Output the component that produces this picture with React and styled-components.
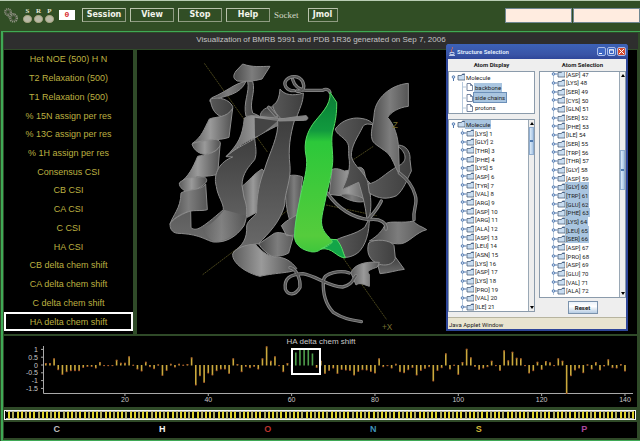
import React from "react";
import styled, { createGlobalStyle } from "styled-components";

const GlobalStyle = createGlobalStyle`
  *, *::before, *::after { box-sizing: border-box; }
  body { margin: 0; background: #2c4724; font-family: "Liberation Sans", Arial, sans-serif; }
  button, input { font: inherit; margin: 0; padding: 0; border-radius: 0; }
  ul, h1, h2, p { margin: 0; padding: 0; font-weight: normal; list-style: none; }
`;

const Page = styled.div`
  display: flex;
  flex-direction: column;
  min-height: 100vh;
  overflow: hidden;
`;

/* ---------- toolbar ---------- */

const Toolbar = styled.header`
  display: flex;
  align-items: flex-start;
  height: 31px;
  padding: 7px 0 0 4px;
  border-top: 1px solid #b9cdb4;
  background: #314e25;
`;

const Lights = styled.div`
  display: flex;
  gap: 2px;
  margin-left: 5px;
`;

const Light = styled.span`
  display: flex;
  flex-direction: column;
  align-items: center;
  width: 9px;
  color: #e4e6d6;
  font: bold 7px/7px "Liberation Serif", serif;

  &::after {
    content: "";
    width: 9px;
    height: 8px;
    border: 1px solid #a3a37e;
    border-radius: 50%;
    background: #b9b9a6;
  }
`;

const Counter = styled.output`
  width: 16px;
  height: 10px;
  margin: 2px 7px 0 5px;
  background: #fff;
  color: #d8262a;
  font: bold 8px/10px "Liberation Mono", monospace;
  text-align: center;
`;

const ToolButton = styled.button`
  width: ${(p) => (p.$narrow ? 30 : 44)}px;
  height: 14px;
  margin-right: 4px;
  border: 1px solid;
  border-color: #b9c3ac #8f9c82 #8f9c82 #b9c3ac;
  background: transparent;
  color: #f2f4ea;
  font: bold 8px/10px "DejaVu Sans", sans-serif;
  white-space: nowrap;
`;

const SocketLabel = styled.span`
  margin: 0 9px 0 0;
  color: #d5dac8;
  font: 9px/14px "Liberation Serif", serif;
`;

const Fields = styled.div`
  display: flex;
  gap: 1px;
  margin-left: auto;
`;

const Field = styled.input`
  width: 67px;
  height: 15px;
  border: 1px solid #6f8791;
  background: #ffece0;
`;

/* ---------- main frame ---------- */

const Frame = styled.main`
  flex: 1;
  display: flex;
  flex-direction: column;
  margin-left: 1px;
  border: solid #3fa956;
  border-width: 1px 0 3px 2px;
  background: #2f4a28;
`;

const TitleBar = styled.h1`
  height: 16px;
  margin: 1px 2px 1px 1px;
  background: #2e2e2e;
  color: #c4c4c4;
  font-size: 8px;
  line-height: 14px;
  text-align: center;
`;

const Workspace = styled.div`
  flex: 1;
  display: flex;
  gap: 4px;
  margin: 0 3px 2px 1px;
`;

const MeasureList = styled.nav`
  display: grid;
  grid-auto-rows: 1fr;
  width: 129px;
  padding-bottom: 3px;
  background: #000;
`;

const MeasureButton = styled.button`
  border: ${(p) => (p.$active ? "2px solid #fff" : "0")};
  background: none;
  color: #bdb040;
  font-size: 9px;
  line-height: 12px;
`;

const Viewer = styled.section`
  position: relative;
  flex: 1;
  background: #000;
`;

const Canvas = styled.svg`
  display: block;
  width: 100%;
  height: auto;
`;

/* ---------- floating window ---------- */

const Dialog = styled.section`
  position: absolute;
  top: -6px;
  right: 9px;
  width: 182px;
  display: flex;
  flex-direction: column;
  border: solid #2e4699;
  border-width: 0 2px 2px;
  border-radius: 3px 3px 0 0;
  background: #eeeeee;
  color: #222;
  font: 6px/8px Roboto, "Liberation Sans", sans-serif;
`;

const DialogTitle = styled.header`
  display: flex;
  align-items: center;
  gap: 1px;
  height: 15px;
  margin: 0 -2px;
  padding: 0 2px 0 3px;
  border-radius: 3px 3px 0 0;
  background: linear-gradient(#3c62b8, #3954a6 70%, #2e4699);
  color: #dfe6f8;

  h2 { flex: 1; padding-left: 1px; font: bold 6px/10px Roboto, sans-serif; }
`;

const WindowButton = styled.button`
  display: grid;
  place-items: center;
  width: 9px;
  height: 9px;
  border: 1px solid #a9bce8;
  border-radius: 2px;
  background: ${(p) => (p.$close ? "#d4492f" : "#3f68c4")};
`;

const Panes = styled.div`
  display: grid;
  grid-template-columns: 87px 4px 1fr;
`;

const Pane = styled.div`
  display: flex;
  flex-direction: column;
  min-width: 0;
`;

const PaneHead = styled.h2`
  font: bold 6px/12px Roboto, "Liberation Sans", sans-serif;
  text-align: center;
`;

const Splitter = styled.div`
  flex: none;
  height: ${(p) => (p.$horizontal ? "5px" : "auto")};
  background: radial-gradient(circle, #b9bec4 40%, #eeeeee 45%) 0 0 / 2px 2px;
`;

const TreeBox = styled.div`
  display: flex;
  height: ${(p) => p.$height}px;
  border: 1px solid #8b9bab;
  background: #fff;
  overflow: hidden;
`;

const Tree = styled.ul`
  flex: 1;
  display: grid;
  grid-auto-rows: 1fr;
  min-width: 0;
  margin: ${(p) => (p.$scrolled ? "-2px 0 2px" : "0")};
`;

const TreeRow = styled.li`
  display: flex;
  align-items: center;
  min-height: 0;
  padding-left: ${(p) => p.$indent}px;
  background: ${(p) =>
    p.$guide
      ? `linear-gradient(#b5c8dc, #b5c8dc) ${p.$indent + 2}px 0 / 1px 100% no-repeat`
      : "none"};

  svg { flex: none; }
`;

const NodeLabel = styled.span`
  padding: 0 1px;
  background: ${(p) => (p.$selected ? "#a9c5e0" : "transparent")};
  outline: ${(p) => (p.$focused ? "1px solid #6b8fb8" : "0")};
  line-height: 9px;
  white-space: nowrap;
`;

const ScrollBar = styled.div`
  display: flex;
  flex-direction: column;
  width: 6px;
  border-left: 1px solid #9aa8b5;
  background: #eeeeee;
`;

const ScrollArrow = styled.button`
  display: grid;
  place-items: center;
  height: 7px;
  border: 0;
  background: #eeeeee;
`;

const ScrollTrack = styled.div`
  flex: 1;
  padding-top: ${(p) => p.$offset}px;

  &::before {
    content: "";
    display: block;
    height: ${(p) => p.$thumb}px;
    border: 1px solid #8fadd0;
    background: linear-gradient(#4f7ab0, #4f7ab0) center / 3px 2px no-repeat,
      linear-gradient(90deg, #dcebf8, #a9c6e6);
  }
`;

const ResetButton = styled.button`
  align-self: center;
  width: 30px;
  height: 13px;
  margin-top: 3px;
  border: 1px solid #7b93ad;
  background: linear-gradient(#eaf2fa, #fff 40%, #b6cde4);
  color: #222;
  font: bold 6px/9px Roboto, sans-serif;
`;

const StatusLine = styled.p`
  height: 12px;
  margin-top: 3px;
  padding-left: 1px;
  border-top: 1px solid #b7b49f;
  background: #e8e4d0;
  line-height: 14px;
`;

/* ---------- lower panels ---------- */

const ChartPanel = styled.section`
  margin: 0 3px 3px 1px;
  background: #000;
`;

const ResidueStrip = styled.div`
  display: flex;
  height: 10px;
  margin: 0 4px 2px 1px;
  padding: 0 1px;
  border: 1px solid #f4f4f4;
  background: #000;
`;

const Residue = styled.i`
  flex: 1;
  border: solid;
  border-width: 1px 2px 1px 0;
  border-color: #b9b9b9 ${(p) => (p.$strong ? "#e0d22c" : "#b3ac58")} #b9b9b9;
  background: #000;
`;

const Legend = styled.ul`
  display: grid;
  grid-template-columns: repeat(6, 1fr);
  margin: 0 3px 2px 1px;
  padding-bottom: 2px;
  background: #000;
`;

const LegendItem = styled.li`
  color: ${(p) => p.$color};
  font: bold 9px/14px "Liberation Sans", sans-serif;
  text-align: center;
`;

/* ---------- data ---------- */

const MEASURES = [
  "Het NOE (500) H N", "T2 Relaxation (500)", "T1 Relaxation (500)",
  "% 15N assign per res", "% 13C assign per res", "% 1H assign per res",
  "Consensus CSI", "CB CSI", "CA CSI", "C CSI", "HA CSI",
  "CB delta chem shift", "CA delta chem shift", "C delta chem shift",
  "HA delta chem shift",
];

const FIRST = "LYS GLY THR PHE LYS ASP TYR VAL ARG ASP ARG ALA ASP LEU ASN LYS ASP LYS PRO VAL ILE".split(" ");
const SECOND = "ASP LYS SER CYS GLN SER PHE ILE SER TRP THR GLY ASP GLY TRP GLU PHE LYS LEU SER ASP PRO ASP GLU VAL ALA".split(" ");
const SECOND_START = 47;

const ATOMS = [
  ["C", "#bdbdbd"], ["H", "#f4f4f4"], ["O", "#b8322c"],
  ["N", "#3f93b8"], ["S", "#d0b638"], ["P", "#a8489c"],
];

/* Shift per residue, 47 steps to one ppm. */
const SHIFTS = [
  7, 7, 21, -14, -28, -20, -17, -17, -17, -7, -4, -4, -9, 10, -2, -2, -2, 17, 8, 8,
  27, 2, -12, -18, 11, -5, -11, 3, -31, -16, 5, -6, 5, 2, 4, 24, -60, -32, -52, -24,
  -30, -17, -12, -12, -25, 21, 4, -20, -4, -8, -4, -12, 21, 57, 14, 27, -2, -20, 7, -20,
  39, 50, 51, 51, 36, -7, 14, -25, -16, -9, -25, -13, -15, -16, -30, -19, -14, -15, -19, -24,
  21, -5, -2, -9, 5, -20, -23, -14, -7, -30, -16, -10, -5, -48, -16, -8, 36, -12, 2, -28,
  10, 50, 24, -4, -13, -9, -5, 14, -2, -16, 45, 15, 41, 23, 21, -2, -24, -17, 11, -13,
  13, 9, -2, 21, 14, -85, -32, -15, -9, -23, 3, -12, 10, -15, -3, 18, -8, -9, 4, -18,
];

const AXIS_TICKS = [[1, "1"], [0.5, "0.5"], [0, "0"], [-0.5, "-0.5"], [-1, "-1"], [-1.5, "-1.5"]];

/* ---------- drawings ---------- */

function Gears() {
  return (
    <svg width="14" height="15" viewBox="0 0 14 15" fill="none" aria-hidden="true">
      <circle cx="4" cy="4" r="3" stroke="#8e9282" strokeWidth="2" strokeDasharray="1 .7" />
      <circle cx="9.500" cy="10" r="3.500" stroke="#8e9282" strokeWidth="2.200" strokeDasharray="1.200 .7" />
      <circle cx="4" cy="4" r="2" stroke="#5b6050" />
      <circle cx="9.500" cy="10" r="2.300" stroke="#5b6050" />
      <path d="M6 5l5 1M3 7l3 4" stroke="#777b6b" />
    </svg>
  );
}

function Ribbon() {
  return (
    <Canvas viewBox="3 3 1500 852" role="img" aria-label="Protein ribbon model with axes">
      <defs>
        <linearGradient id="g1"><stop offset="0" stopColor="#4a4a4a" /><stop offset=".5" stopColor="#7d7d7d" /><stop offset="1" stopColor="#555" /></linearGradient>
        <linearGradient id="g2" x2="0" y2="1"><stop offset="0" stopColor="#3e3e3e" /><stop offset="1" stopColor="#6a6a6a" /></linearGradient>
        <linearGradient id="g3"><stop offset="0" stopColor="#5c5c5c" /><stop offset=".45" stopColor="#9a9a9a" /><stop offset="1" stopColor="#505050" /></linearGradient>
        <linearGradient id="g4"><stop offset="0" stopColor="#585858" /><stop offset="1" stopColor="#3f3f3f" /></linearGradient>
        <linearGradient id="green" x2="0" y2="1"><stop offset="0" stopColor="#0f7a36" /><stop offset=".12" stopColor="#0c8c3a" /><stop offset=".24" stopColor="#129a3e" /><stop offset=".31" stopColor="#2cc83a" /><stop offset=".9" stopColor="#55cc3c" /><stop offset="1" stopColor="#3fc63c" /></linearGradient>
      </defs>
      <g stroke="#6d6628" strokeWidth="2" strokeDasharray="6 2" fill="none">
        <path d="M205 43L395 310M200 677L480 465M640 340L712 292M622 628L752 812M570 468L722 500" />
      </g>
      <g stroke="#8b8b8b" strokeWidth="3" strokeLinejoin="round">
        {/* far strands */}
        <path fill="url(#g1)" d="M448 388C460 374 485 378 500 384L492 450 476 545C458 520 446 470 448 388Z" />
        <path fill="url(#g3)" d="M318 412C340 395 352 375 378 360L392 375 366 440 362 490 334 505Z" />
        <path fill="url(#g1)" d="M436 530C450 515 465 508 482 498L482 558 452 560ZM368 585L415 553C435 545 455 560 472 562L458 612C440 622 425 622 408 622 390 612 378 600 368 585Z" />
        <path fill="url(#g3)" d="M588 362C600 355 615 362 625 366L660 360C668 350 682 355 685 368L690 392C720 410 705 440 695 450L580 436Z" />
        <path fill="url(#g1)" d="M612 437C630 430 672 440 684 450L682 458C660 462 630 452 612 437Z" />
        <path fill="url(#g2)" d="M372 202C374 184 392 172 410 174L426 190 426 212 398 206Z" />
        <path fill="url(#g4)" d="M432 120C445 138 470 142 502 132 502 160 490 180 482 205L438 212C425 200 414 188 410 170 425 160 430 145 432 120Z" />
        {/* left helix */}
        <path fill="url(#g1)" d="M320 45C350 56 376 52 402 52L378 90C352 97 332 98 304 96 289 88 292 78 300 66Z" />
        <path fill="url(#g4)" d="M338 97L350 97C360 130 338 160 350 192L368 200 330 202C320 160 342 130 335 97Z" />
        <path fill="url(#g1)" d="M330 97C295 103 272 128 228 146 215 156 224 166 232 152 270 140 312 138 330 97Z" />
        <path fill="url(#g4)" d="M223 150C225 178 240 205 268 204 284 197 292 184 290 172 280 152 250 142 223 150Z" />
        <path fill="url(#g3)" d="M220 210C240 202 272 208 290 178L279 265C250 276 202 270 168 284 198 264 204 240 220 210Z" />
        <path fill="url(#g3)" d="M168 285C173 303 190 316 210 316 236 310 252 298 253 285 254 273 240 270 230 272 202 276 182 278 168 285Z" />
        <path fill="url(#g3)" d="M185 322C205 316 240 316 252 290L245 376C215 386 150 378 131 402 158 382 170 358 185 322Z" />
        <path fill="url(#g3)" d="M130 402C129 416 145 428 160 427 186 420 209 408 212 395 213 384 200 382 190 384 166 386 146 386 130 402Z" />
        <path fill="url(#g1)" d="M135 432C150 421 200 424 209 405L214 482C194 488 168 480 145 492 126 500 106 514 102 526 110 498 134 480 135 432Z" />
        {/* lower left sweep */}
        <path fill="url(#g2)" d="M270 323C300 295 350 275 356 268 358 290 364 312 356 332 340 352 318 372 318 410L324 446C334 470 336 500 324 530 300 565 268 582 232 579 205 572 190 555 125 553 106 551 100 535 103 522 118 504 145 492 164 486L165 536C180 548 195 540 262 482 264 465 244 440 241 412 230 374 252 338 290 324Z" />
        <path fill="url(#g3)" stroke="none" d="M196 538C225 532 250 500 264 482L330 500C320 550 270 580 234 577 215 570 210 552 196 538Z" opacity=".55" />
        {/* crossing and long central strand */}
        <path fill="url(#g3)" d="M325 207L346 200C384 205 410 204 475 214 440 220 400 240 355 268 322 280 300 298 270 323 306 286 320 262 325 207Z" />
        <path fill="#444" stroke="none" d="M356 206L424 216C400 238 375 258 357 264Z" />
        <path fill="url(#g2)" d="M425 214L476 212C462 260 456 300 462 350 466 392 446 430 446 468 432 520 400 550 368 584 330 588 304 598 292 610 320 588 334 570 332 530 336 510 362 502 362 488 362 440 370 400 386 360 400 312 430 260 425 214Z" />
        <path fill="url(#g3)" d="M290 615C296 598 330 586 358 586 374 604 392 620 414 624 448 622 468 640 482 658 480 672 420 670 372 682 330 672 288 642 290 615Z" />
        <path fill="#858585" d="M428 210C455 208 480 202 510 200 520 206 515 214 505 214L428 216Z" />
        {/* right side */}
        <path fill="url(#g4)" d="M598 240C612 220 635 208 662 207 690 208 706 216 712 228 692 222 684 226 680 234 665 265 645 290 646 322 652 352 690 372 696 402 706 440 708 480 698 514L692 505C688 470 680 440 668 400L618 422C634 390 642 365 640 335 634 300 646 290 625 270 614 260 600 252 598 240Z" />
        <path fill="url(#g4)" d="M788 288C812 290 824 310 822 332L826 366C812 394 804 420 782 440 752 452 728 450 700 432L696 405C728 400 744 374 788 350 815 338 812 312 788 294Z" />
        <path fill="url(#g1)" d="M817 103L817 172C785 176 765 190 755 205 776 230 786 262 788 300L790 376C774 350 772 330 755 312 730 292 710 284 708 270 702 250 712 230 715 190 720 150 760 108 817 103Z" />
        <path fill="url(#g4)" d="M602 572C625 560 660 556 686 535L700 508C700 550 690 590 665 612 650 622 638 625 628 625Z" />
        <path fill="url(#g1)" d="M748 524C765 514 800 524 832 516 842 530 858 532 872 542 840 550 820 580 796 584 768 588 730 570 700 576 726 560 740 545 748 524Z" />
        <path fill="url(#g2)" d="M778 624L805 661C780 664 758 672 732 674L726 650Z" />
        <path fill="url(#g4)" d="M698 582C715 568 765 572 774 590L778 628C770 650 745 650 730 646 700 636 690 610 698 582Z" />
        <path fill="url(#g3)" d="M645 672C652 650 680 636 730 640L724 654C702 662 690 666 700 676L700 712C680 705 670 700 660 708Z" />
      </g>
      {/* thin coils: a light edge with a darker core */}
      {[["#8b8b8b", 10], ["#585858", 5]].map(([color, width]) => (
        <g key={color} fill="none" stroke={color} strokeWidth={width} strokeLinecap="round">
          <path d="M474 125C450 125 440 105 452 92 465 78 490 80 500 98 508 115 500 130 482 126M470 92C475 110 490 122 510 124L560 124C570 118 580 122 582 130" />
          <path d="M398 175L420 200M790 372C815 390 830 410 838 440 846 465 830 480 834 512" />
          <path d="M574 432C600 470 640 505 700 512 735 508 752 522 750 540M736 456C725 480 710 495 698 510" />
          <path d="M462 656C482 660 494 690 492 715 478 740 456 740 448 720 444 690 460 676 500 674 540 680 580 714 620 714 650 708 650 690 660 680M640 672C612 662 566 672 562 694 560 730 568 765 592 790 620 808 640 812 676 818" />
        </g>
      ))}
      <g stroke="#55dc62" strokeWidth="3" strokeLinejoin="round">
        <path fill="url(#green)" d="M582 130L602 160C603 190 598 220 592 240 582 270 592 310 590 340 586 380 578 410 572 432 566 470 552 510 558 530 562 552 580 562 583 571L602 572 555 600C545 610 530 610 520 607 490 600 472 580 476 555 476 520 490 460 498 420 508 380 516 345 510 320 502 280 514 250 530 226 550 198 586 170 582 130Z" />
        <path fill="#12a548" d="M555 600C575 592 600 580 583 571L602 572C618 590 620 608 628 627 600 625 590 594 555 600Z" />
      </g>
      <g fill="#777030" fontFamily="Liberation Sans" fontSize="25">
        <text x="770" y="237">Z</text>
        <text x="738" y="842">+X</text>
      </g>
    </Canvas>
  );
}

function ShiftChart() {
  const x = (n) => 37.6 + n * 4.167;
  return (
    <Canvas viewBox="0 1 633 71" role="img" aria-label="HA delta chem shift per residue">
      <g fill="#c8c8c8" fontFamily="Liberation Sans" fontSize="7">
        <text x="317" y="9" fontSize="8" textAnchor="middle">HA delta chem shift</text>
        {AXIS_TICKS.map(([v, label]) => (
          <text key={label} x="34" y={32.500 - v * 15.600} textAnchor="end">{label}</text>
        ))}
        {[20, 40, 60, 80, 100, 120, 140].map((n) => (
          <text key={n} x={x(n)} y="67" textAnchor="middle">{n}</text>
        ))}
      </g>
      <path
        d={`M39.500 11V58.500H629${AXIS_TICKS.map(([v]) => `M37 ${30 - v * 15.600}h2`).join("")}${[20, 40, 60, 80, 100, 120, 140].map((n) => `M${x(n)} 58v3`).join("")}`}
        stroke="#a9a9a9" fill="none"
      />
      {SHIFTS.map((s, i) => {
        const n = i + 1;
        const h = Math.abs(s) / 3;
        const assigned = n < 60 || n > 65;
        const color = n === 60 ? "#9a4496" : assigned ? "#cba93c" : "#4f9e4c";
        return (
          <g key={n}>
            <rect x={x(n) - 0.8} y={s > 0 ? 30.500 - h : 30} width="1.600" height={h} fill={color} />
            {assigned && (
              <rect x={x(n) - 0.8} y={s > 0 ? 30.500 - h : 29.500 + h} width="1.600" height="1" fill="#b0542a" />
            )}
          </g>
        );
      })}
      <rect x="288" y="14" width="28" height="25" fill="none" stroke="#fff" strokeWidth="2" />
    </Canvas>
  );
}

function Folder({ open }) {
  return (
    <svg width="14" height="8" viewBox="0 0 14 8" aria-hidden="true">
      <circle cx="2.500" cy="4" r="1.300" fill="#c9dbf0" stroke="#5077ad" strokeWidth=".9" />
      <path d={open ? "M2.500 5v3" : "M4 4h2.500"} stroke="#5077ad" />
      <path d="M7 2.500h3.500L11.500 1H14v6H7z" fill="#c8dcf0" stroke="#4b5f78" strokeWidth=".8" />
      <path d="M11 1.500h2.500" stroke="#47648c" />
    </svg>
  );
}

function Sheet() {
  return (
    <svg width="14" height="8" viewBox="0 0 14 8" aria-hidden="true">
      <path d="M2 4h4" stroke="#b5c8dc" />
      <path d="M7 .5h3.500l2 2v5H7z" fill="#fff" stroke="#57698c" strokeWidth=".8" />
      <path d="M10.500 .5v2h2" fill="none" stroke="#57698c" strokeWidth=".8" />
    </svg>
  );
}

function Scroller({ offset, thumb }) {
  return (
    <ScrollBar>
      <ScrollArrow aria-label="Scroll up">
        <svg width="4" height="3" viewBox="0 0 4 3"><path d="M0 3l2-3 2 3z" /></svg>
      </ScrollArrow>
      <ScrollTrack $offset={offset} $thumb={thumb} />
      <ScrollArrow aria-label="Scroll down">
        <svg width="4" height="3" viewBox="0 0 4 3"><path d="M0 0l2 3 2-3z" /></svg>
      </ScrollArrow>
    </ScrollBar>
  );
}

function StructureDialog() {
  return (
    <Dialog aria-label="Structure Selection">
      <DialogTitle>
        <svg width="6" height="9" viewBox="0 0 6 9" fill="none" aria-hidden="true">
          <path d="M3 0c2 2-2 2 0 5" stroke="#e0705a" />
          <path d="M1 5.500h4v2H1zM0 8.500h6" stroke="#b9c6e6" />
        </svg>
        <h2>Structure Selection</h2>
        <WindowButton aria-label="Minimize">
          <svg width="5" height="5" viewBox="0 0 5 5"><path d="M0 4.500h3" stroke="#fff" /></svg>
        </WindowButton>
        <WindowButton aria-label="Maximize">
          <svg width="5" height="5" viewBox="0 0 5 5"><path d="M.5 1h4v3.500h-4zM0 .7h5" fill="none" stroke="#fff" strokeWidth=".8" /></svg>
        </WindowButton>
        <WindowButton $close aria-label="Close">
          <svg width="5" height="5" viewBox="0 0 5 5"><path d="M0 0l5 5M5 0L0 5" stroke="#fff" /></svg>
        </WindowButton>
      </DialogTitle>
      <Panes>
        <Pane>
          <PaneHead>Atom Display</PaneHead>
          <TreeBox $height={43}>
            <Tree>
              <TreeRow $indent={2}><Folder open /><NodeLabel>Molecule</NodeLabel></TreeRow>
              <TreeRow $indent={11} $guide><Sheet /><NodeLabel $selected>backbone</NodeLabel></TreeRow>
              <TreeRow $indent={11} $guide><Sheet /><NodeLabel $selected $focused>side chains</NodeLabel></TreeRow>
              <TreeRow $indent={11} $guide><Sheet /><NodeLabel>protons</NodeLabel></TreeRow>
            </Tree>
          </TreeBox>
          <Splitter $horizontal />
          <TreeBox $height={193}>
            <Tree>
              <TreeRow $indent={2}><Folder open /><NodeLabel $selected>Molecule</NodeLabel></TreeRow>
              {FIRST.map((name, i) => (
                <TreeRow key={i} $indent={11} $guide><Folder /><NodeLabel>{`[${name}] ${i + 1}`}</NodeLabel></TreeRow>
              ))}
            </Tree>
            <Scroller offset={0} thumb={28} />
          </TreeBox>
        </Pane>
        <Splitter />
        <Pane>
          <PaneHead>Atom Selection</PaneHead>
          <TreeBox $height={227}>
            <Tree $scrolled>
              {SECOND.map((name, i) => (
                <TreeRow key={i} $indent={11} $guide>
                  <Folder /><NodeLabel $selected={i > 12 && i < 20}>{`[${name}] ${i + SECOND_START}`}</NodeLabel>
                </TreeRow>
              ))}
            </Tree>
            <Scroller offset={71} thumb={40} />
          </TreeBox>
          <ResetButton>Reset</ResetButton>
        </Pane>
      </Panes>
      <StatusLine>Java Applet Window</StatusLine>
    </Dialog>
  );
}

export default function App() {
  return (
    <Page>
      <GlobalStyle />
      <Toolbar>
        <Gears />
        <Lights><Light>S</Light><Light>R</Light><Light>P</Light></Lights>
        <Counter>0</Counter>
        {["Session", "View", "Stop", "Help"].map((t) => <ToolButton key={t}>{t}</ToolButton>)}
        <SocketLabel>Socket</SocketLabel>
        <ToolButton $narrow>Jmol</ToolButton>
        <Fields>
          <Field aria-label="Host" />
          <Field aria-label="Port" />
        </Fields>
      </Toolbar>
      <Frame>
        <TitleBar>Visualization of BMRB 5991 and PDB 1R36 generated on Sep 7, 2006</TitleBar>
        <Workspace>
          <MeasureList aria-label="Measurements">
            {MEASURES.map((m) => (
              <MeasureButton key={m} $active={m === "HA delta chem shift"}>{m}</MeasureButton>
            ))}
          </MeasureList>
          <Viewer>
            <Ribbon />
            <StructureDialog />
          </Viewer>
        </Workspace>
        <ChartPanel><ShiftChart /></ChartPanel>
        <ResidueStrip aria-hidden="true">
          {Array.from({ length: 150 }, (_, i) => <Residue key={i} $strong={i % 3 !== 1} />)}
        </ResidueStrip>
        <Legend>
          {ATOMS.map(([name, color]) => <LegendItem key={name} $color={color}>{name}</LegendItem>)}
        </Legend>
      </Frame>
    </Page>
  );
}
